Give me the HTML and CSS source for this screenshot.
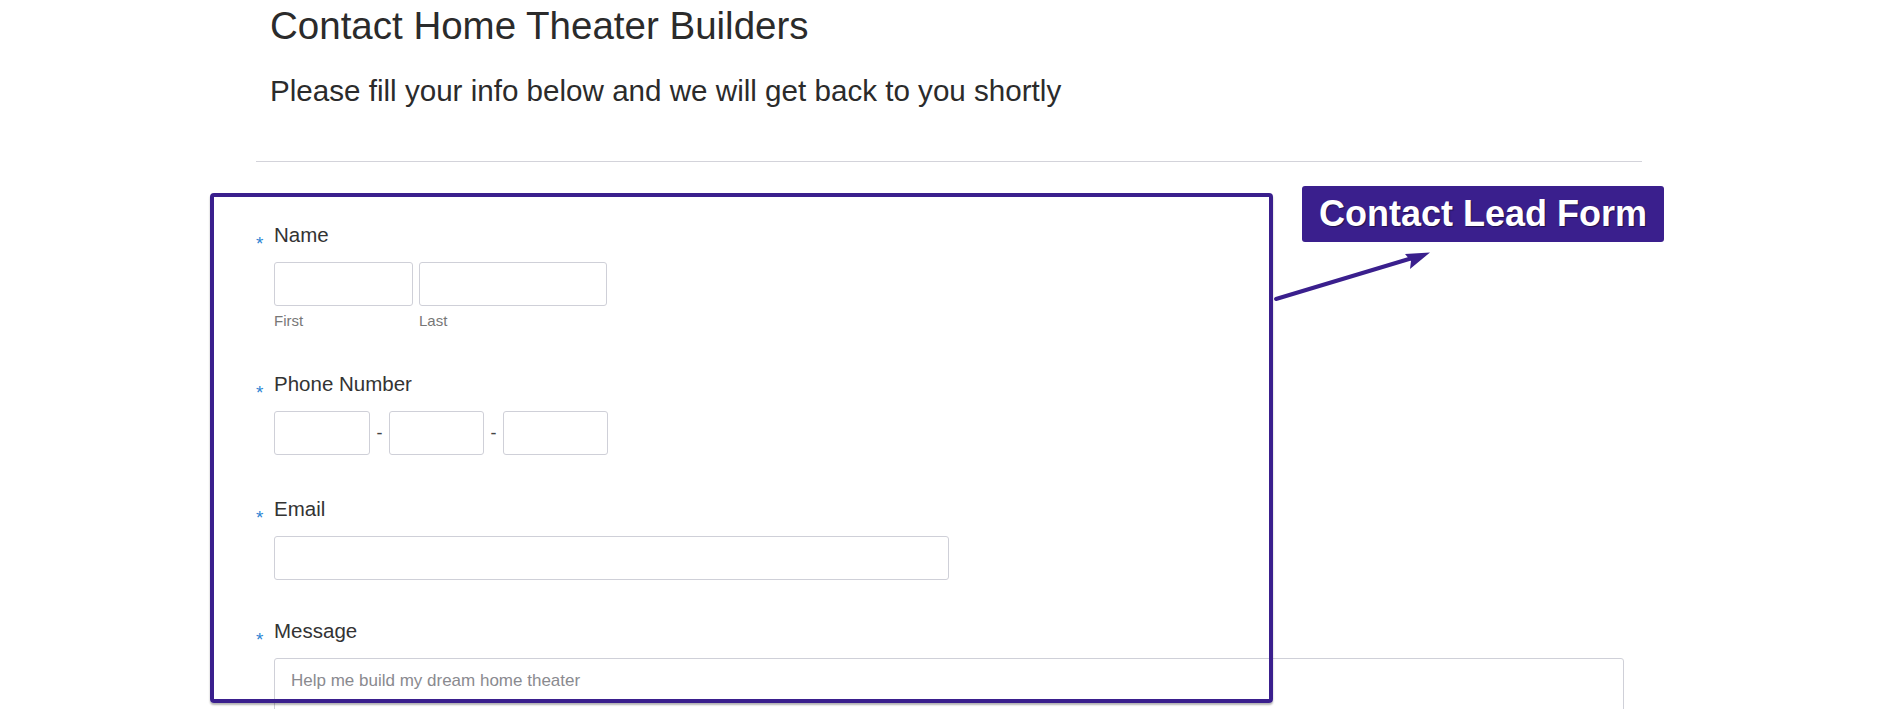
FILE: index.html
```html
<!DOCTYPE html>
<html lang="en">
<head>
<meta charset="utf-8">
<title>Contact Home Theater Builders</title>
<link rel="stylesheet" href="styles.css">
</head>
<body>
<div class="page">
  <header class="intro">
    <h1 class="title">Contact Home Theater Builders</h1>
    <p class="subtitle">Please fill your info below and we will get back to you shortly</p>
  </header>
  <div class="rule"></div>
  <form class="form">
    <div class="field">
      <span class="req">*</span>
      <div class="field-body">
        <label class="label">Name</label>
        <div class="row">
          <div class="sub">
            <input class="input w-first" type="text">
            <span class="hint">First</span>
          </div>
          <div class="sub">
            <input class="input w-last" type="text">
            <span class="hint">Last</span>
          </div>
        </div>
      </div>
    </div>
    <div class="field">
      <span class="req">*</span>
      <div class="field-body">
        <label class="label">Phone Number</label>
        <div class="row phone">
          <input class="input w-p1" type="text">
          <span class="dash">-</span>
          <input class="input w-p2" type="text">
          <span class="dash">-</span>
          <input class="input w-p3" type="text">
        </div>
      </div>
    </div>
    <div class="field">
      <span class="req">*</span>
      <div class="field-body">
        <label class="label">Email</label>
        <div class="row">
          <input class="input w-email" type="text">
        </div>
      </div>
    </div>
    <div class="field field-message">
      <span class="req">*</span>
      <div class="field-body">
        <label class="label">Message</label>
        <div class="row">
          <textarea class="textarea" placeholder="Help me build my dream home theater"></textarea>
        </div>
      </div>
    </div>
  </form>
</div>

<div class="callout-box"></div>
<div class="callout-label">Contact Lead Form</div>
<svg class="callout-arrow" width="170" height="60" viewBox="1270 248 170 60">
  <line x1="1276" y1="299" x2="1414" y2="257.5" stroke="#3a1f8d" stroke-width="4" stroke-linecap="round"/>
  <polygon points="1430,252.5 1405,254 1411,261 1410,269" fill="#3a1f8d"/>
</svg>
</body>
</html>
```

FILE: styles.css
```css
html, body {
  margin: 0;
  padding: 0;
  overflow: hidden;
  background: #ffffff;
}

body {
  font-family: "Liberation Sans", Arial, Helvetica, sans-serif;
  color: #333333;
}

.page {
  margin-left: 256px;
  width: 1386px;
}

.intro {
  padding: 0 14px;
}

.title {
  margin: 4px 0 0 0;
  font-size: 38.5px;
  line-height: 44px;
  font-weight: normal;
  color: #2b2b2b;
}

.subtitle {
  margin: 26px 0 0 0;
  font-size: 29.6px;
  line-height: 34px;
  color: #2b2b2b;
}

.rule {
  margin-top: 53px;
  height: 1px;
  background: #d3d3da;
}

.form {
  margin-top: 61px;
  display: flex;
  flex-direction: column;
}

.field {
  display: flex;
}

.field + .field {
  margin-top: 42px;
}

.field.field-message {
  margin-top: 39px;
}

.req {
  display: block;
  width: 18px;
  flex: none;
  margin-top: 13px;
  font-size: 19px;
  line-height: 16px;
  color: #2f86d4;
}

.field-body {
  display: flex;
  flex-direction: column;
}

.label {
  display: block;
  font-size: 20.5px;
  line-height: 24px;
  color: #333333;
}

.row {
  display: flex;
  gap: 6px;
  margin-top: 15px;
}

.row.phone {
  gap: 0;
  align-items: center;
}

.sub {
  display: flex;
  flex-direction: column;
}

.input {
  box-sizing: border-box;
  height: 44px;
  margin: 0;
  padding: 0 12px;
  border: 1px solid #cfd0d8;
  border-radius: 3px;
  background: #ffffff;
  font-family: inherit;
  font-size: 16px;
  outline: none;
}

.w-first { width: 139px; }
.w-last { width: 188px; }
.w-p1 { width: 96px; }
.w-p2 { width: 95px; }
.w-p3 { width: 105px; }
.w-email { width: 675px; }

.dash {
  width: 19px;
  text-align: center;
  font-size: 18px;
  line-height: 18px;
  color: #444444;
}

.hint {
  display: block;
  margin-top: 6px;
  font-size: 15px;
  line-height: 18px;
  color: #777777;
}

.textarea {
  box-sizing: border-box;
  width: 1350px;
  height: 150px;
  margin: 0;
  padding: 12px 16px;
  border: 1px solid #cfd0d8;
  border-radius: 3px;
  font-family: inherit;
  font-size: 17px;
  line-height: 20px;
  color: #333333;
  resize: none;
  outline: none;
}

.textarea::placeholder {
  color: #8a8a8f;
}

/* Annotation overlay */
.callout-box {
  position: absolute;
  left: 210px;
  top: 193px;
  width: 1063px;
  height: 510px;
  box-sizing: border-box;
  border: 4px solid #3a1f8d;
  border-radius: 4px;
  box-shadow: 0 2px 2px rgba(0, 0, 0, 0.3);
}

.callout-label {
  position: absolute;
  left: 1302px;
  top: 186px;
  width: 362px;
  height: 56px;
  box-sizing: border-box;
  padding-left: 17px;
  background: #3a1f8d;
  border-radius: 3px;
  color: #ffffff;
  font-size: 36px;
  line-height: 56px;
  font-weight: bold;
  white-space: nowrap;
  text-shadow: 1px 1px 1px rgba(0, 0, 0, 0.45);
}

.callout-arrow {
  position: absolute;
  left: 1270px;
  top: 248px;
}
```
